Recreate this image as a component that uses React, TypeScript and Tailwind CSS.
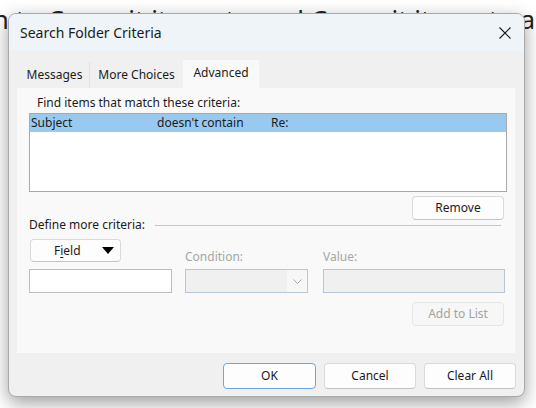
import React from "react"

const font = { fontFamily: '"Noto Sans", "Open Sans", Arial, sans-serif' }

function Btn({ children, className = "", disabled = false }: { children: React.ReactNode; className?: string; disabled?: boolean }) {
  return (
    <div
      className={`flex items-center justify-center rounded-[4px] border text-[12px] ${
        disabled ? "border-[#e6e6e6] bg-[#f7f7f7] text-[#a3a3a3]" : "border-[#d9d9d9] border-b-[#c4c4c4] bg-[#fdfdfd] text-[#1b1b1b]"
      } ${className}`}
    >
      {children}
    </div>
  )
}

export default function App() {
  return (
    <div className="relative h-[408px] w-[536px] overflow-hidden bg-white" style={font}>
      {/* document text behind the dialog */}
      <div className="absolute right-[-24px] top-[6px] whitespace-nowrap text-[26px] leading-[26px] text-[#222]">
        numbers. Then assign to Commit items to and Commit items to are
      </div>

      <div className="relative pl-[8px] pt-[13px]">
        <div className="flex h-[384px] w-[517px] flex-col overflow-hidden rounded-lg border border-[#a9a9a9] bg-[#f0f0f0] shadow-[0_6px_18px_rgba(0,0,0,0.38)]">
          {/* title bar */}
          <div className="flex h-[37px] shrink-0 items-center justify-between bg-[#eef4f8] pl-[11px] pr-[12px]">
            <span className="text-[14px] text-[#1b1b1b]">Search Folder Criteria</span>
            <svg width="14" height="14" viewBox="0 0 14 14" className="text-[#1b1b1b]">
              <path d="M1.5 1.5 L12.5 12.5 M12.5 1.5 L1.5 12.5" stroke="currentColor" strokeWidth="1.1" fill="none" />
            </svg>
          </div>

          <div className="flex flex-1 flex-col px-[8px] pt-[9px]">
            {/* tabs */}
            <div className="flex items-end pl-[3px] text-[12px] text-[#1b1b1b]">
              <div className="flex h-[26px] w-[70px] items-center justify-center border-r border-[#e2e2e2]">Messages</div>
              <div className="flex h-[26px] w-[93px] items-center justify-center">More Choices</div>
              <div className="flex h-[28px] w-[76px] items-center justify-center bg-[#f9f9f9] pb-[3px]">Advanced</div>
            </div>

            {/* panel */}
            <div className="flex h-[265px] w-[498px] flex-col bg-[#f9f9f9] text-[12px] text-[#1b1b1b]">
              <div className="pl-[20px] pt-[7px] leading-[16px]">Find items that match these criteria:</div>
              <div className="ml-[12px] mt-[2px] h-[79px] w-[478px] border border-[#a9a9a9] bg-white">
                <div className="flex h-[18px] items-center bg-[#99c9ef] pl-[1px] leading-[16px]">
                  <span className="w-[126px]">Subject</span>
                  <span className="w-[114px]">doesn't contain</span>
                  <span>Re:</span>
                </div>
              </div>
              <div className="mr-[11px] mt-[4px] flex justify-end">
                <Btn className="h-[24px] w-[92px]">Remove</Btn>
              </div>
              <div className="-mt-[3px] flex items-center pl-[12px] pr-[14px] leading-[16px]">
                <span>Define more criteria:</span>
                <div className="ml-[10px] h-px flex-1 bg-[#c8c8c8]" />
              </div>

              <div className="ml-[12px] mt-[6px] flex items-end">
                <div className="flex w-[143px] flex-col">
                  <Btn className="ml-[1px] h-[23px] w-[91px] justify-start pl-[23px]">
                    <span>
                      F<span className="underline underline-offset-2">i</span>eld
                    </span>
                    <svg width="12" height="7" viewBox="0 0 12 7" className="ml-[21px]">
                      <path d="M0 0 H12 L6 7 Z" fill="#000" />
                    </svg>
                  </Btn>
                  <div className="mt-[7px] h-[24px] w-[143px] border border-[#bdbdbd] bg-white" />
                </div>
                <div className="ml-[13px] flex w-[123px] flex-col">
                  <span className="leading-[16px] text-[#a6a6a6]">Condition:</span>
                  <div className="mt-[4px] flex h-[24px] w-[123px] border border-[#b7c7d8] bg-[#f0f0f0]">
                    <div className="flex-1" />
                    <div className="flex w-[20px] items-center justify-center bg-[#f7f7f7]">
                      <svg width="9" height="5" viewBox="0 0 9 5">
                        <path d="M0.5 0.5 L4.5 4.5 L8.5 0.5" stroke="#a0a0a0" strokeWidth="0.9" fill="none" />
                      </svg>
                    </div>
                  </div>
                </div>
                <div className="ml-[15px] flex w-[182px] flex-col">
                  <span className="leading-[16px] text-[#a6a6a6]">Value:</span>
                  <div className="mt-[4px] h-[24px] w-[182px] border border-[#b7c7d8] bg-[#f0f0f0]" />
                </div>
              </div>

              <div className="mr-[11px] mt-[9px] flex justify-end">
                <Btn disabled className="h-[24px] w-[92px]">
                  Add to List
                </Btn>
              </div>
            </div>

            {/* dialog buttons */}
            <div className="mt-[10px] flex justify-end gap-[8px]">
              <Btn className="h-[26px] w-[93px] !border-[#6aa7de]">OK</Btn>
              <Btn className="h-[26px] w-[92px]">Cancel</Btn>
              <Btn className="h-[26px] w-[92px]">Clear All</Btn>
            </div>
          </div>
        </div>
      </div>
    </div>
  )
}
